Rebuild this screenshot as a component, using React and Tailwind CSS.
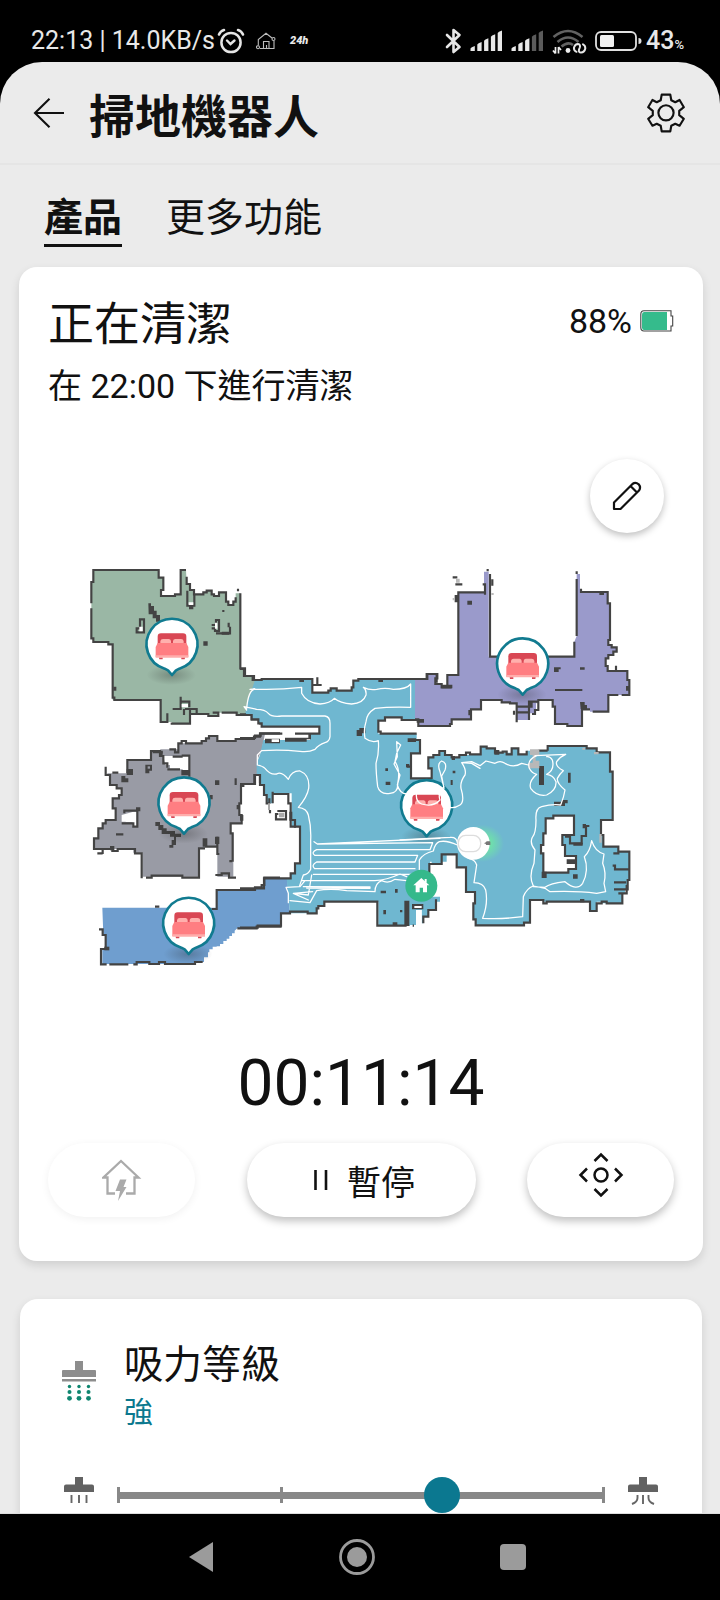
import React from "react";

const WALL = "#434343";

const Bluetooth = () => (
  <svg width="17" height="26" viewBox="0 0 17 26" fill="none" stroke="#e6e6e6" strokeWidth="2.6" strokeLinejoin="round" strokeLinecap="round" aria-hidden="true">
    <path d="M2 7 14.500 19 8.500 24 V2 L14.500 7 2 19" />
  </svg>
);

const Alarm = () => (
  <svg width="28" height="26" viewBox="0 0 28 26" fill="none" stroke="#e6e6e6" strokeLinecap="round" aria-hidden="true">
    <circle cx="14" cy="14.500" r="9.600" strokeWidth="2.500" />
    <path d="M10 12.500 13.500 16 17.500 12.500" strokeWidth="2.400" />
    <path d="M2 6.500Q3.500 3 7 2M26 6.500Q24.500 3 21 2" strokeWidth="2.600" />
  </svg>
);

const SmartHome = () => (
  <svg width="20" height="18" viewBox="0 0 20 18" fill="none" stroke="#bdbdbd" strokeWidth="1.100" aria-hidden="true">
    <path d="M2.300 13.500V7.500L10 1.200 16 6M18 9V16.500H4M7.500 16V9.500H13V16M10.500 16V13" />
    <circle cx="2" cy="15.200" r="1.500" />
    <circle cx="17.500" cy="7" r="1.500" />
  </svg>
);

const Signal = ({ level }) => (
  <svg width="33" height="22" viewBox="0 0 33 22" aria-hidden="true">
    {[0, 1, 2, 3, 4].map((i) => (
      <path
        key={i}
        d={`M${i * 6.8 + 0.5} ${18.500 - i * 3.900}Q${i * 6.8 + 1} ${17 - i * 3.900} ${i * 6.8 + 4.800} ${16 - i * 3.900}V21H${i * 6.8 + 0.500}Z`}
        fill={i < level ? "#e8e8e8" : "#5b5b5b"}
      />
    ))}
  </svg>
);

const Wifi = () => (
  <svg width="35" height="25" viewBox="0 0 35 25" fill="none" aria-hidden="true">
    <g stroke="#626262" strokeWidth="2.600">
      <path d="M1.500 8Q16 -4 30.500 8" />
      <path d="M5.500 13Q16 4 26.500 13" />
      <path d="M9.500 17.500Q16 12 21 16" />
    </g>
    <circle cx="16" cy="21.500" r="2.400" fill="#eee" />
    <path d="M3.500 18V24.500M3.500 24.500 1 21.500M6.500 24.500V18M6.500 18 9 21" stroke="#eee" strokeWidth="1.700" />
    <path d="M24.500 22.800Q21.500 21.500 22 18.500 23 15 26 15 28.800 15.500 27.800 18.500L27 20.500Q26.300 23.500 29 23.500 32.500 23.300 33.300 19.500 33.500 16.500 31 15.300" stroke="#e6e6e6" strokeWidth="2" strokeLinecap="round" />
  </svg>
);

const PhoneBattery = () => (
  <svg width="47" height="20" viewBox="0 0 47 20" aria-hidden="true">
    <rect x="1" y="1" width="40" height="18" rx="5" fill="none" stroke="#e0e0e0" strokeWidth="1.800" />
    <rect x="5" y="4" width="14" height="12" rx="1.500" fill="#f0f0f0" />
    <path d="M43.500 7Q46.500 7 46.500 10T43.500 13Z" fill="#e0e0e0" />
  </svg>
);

const BackArrow = () => (
  <svg width="32" height="32" viewBox="0 0 32 32" fill="none" stroke="#111" strokeWidth="2.100" aria-hidden="true">
    <path d="M31 16H2M16.500 1.700 2 16 16.500 30.300" />
  </svg>
);

const Gear = () => (
  <svg width="40" height="40" viewBox="858 280 120 121" fill="none" stroke="#111" strokeWidth="6.500" strokeLinejoin="round" aria-hidden="true">
    <path d="M905 285H931L934 302 946 308 959 301 972 323 958 334V347L972 358 959 379 946 373 934 379 931 396H905L902 379 890 373 877 379 864 358 878 347V334L864 323 877 301 890 308 902 302Z" />
    <circle cx="918" cy="340" r="23" />
  </svg>
);

const RobotBattery = () => (
  <svg width="34" height="22" viewBox="0 0 34 22" fill="none" aria-hidden="true">
    <path d="M4 .8H31V6H32.700V16H31V21H4Q.8 21 .8 17.500V4.300Q.8 .8 4 .8Z" stroke="#444" strokeWidth="1.100" />
    <path d="M4 2H27V20H4Q2 20 2 17.500V4.500Q2 2 4 2Z" fill="#35bb8c" />
  </svg>
);

const Pencil = () => (
  <svg width="30" height="30" viewBox="0 0 30 30" fill="none" stroke="#111" strokeWidth="2.200" strokeLinejoin="round" aria-hidden="true">
    <path d="M2 21.500 20.500 3Q23.500 .8 26.700 3.300 29.200 6.500 27 9.500L8.500 28H2ZM18.500 5 25 11.500" />
  </svg>
);

const ChargeHome = () => (
  <svg width="40" height="42" viewBox="0 0 40 42" aria-hidden="true">
    <path d="M13 34.500H5.500V18.500H1.500L19 2 36.500 18.500H32.500V34.500H24" fill="none" stroke="#aaa" strokeWidth="2.300" />
    <path d="M18 20.500H24.500L21.500 28H24.500L16 42 18 32H13.500Z" fill="#aaa" />
  </svg>
);

const Pause = () => (
  <svg width="16" height="22" viewBox="0 0 16 22" aria-hidden="true">
    <path d="M2.500 1V21M13 1V21" stroke="#111" strokeWidth="2.600" />
  </svg>
);

const DirectionPad = () => (
  <svg width="46" height="46" viewBox="0 0 46 46" fill="none" stroke="#111" strokeWidth="2.500" aria-hidden="true">
    <circle cx="23" cy="23" r="6.500" />
    <path d="M16.500 9 23 2.500 29.500 9M16.500 37 23 43.500 29.500 37M9 16.500 2.500 23 9 29.500M37 16.500 43.500 23 37 29.500" />
  </svg>
);

const SuctionIcon = () => (
  <svg width="34" height="40" viewBox="0 0 34 40" aria-hidden="true">
    <path d="M13 0H21V9H33Q34 9 34 10V16H0V10Q0 9 1 9H13ZM0 18H34V20.500H0Z" fill="#8d8d8d" />
    <g fill="#0f8670">
      {[7.500, 17, 26.500].map((x) => (
        <g key={x}>
          <circle cx={x} cy="25.500" r="1.700" />
          <circle cx={x} cy="31" r="2" />
          <circle cx={x} cy="37.300" r="2.400" />
        </g>
      ))}
    </g>
  </svg>
);

const NozzleIcon = ({ wide }) => (
  <svg width="30" height="28" viewBox="0 0 30 28" className="shrink-0" aria-hidden="true">
    <path d="M11 0H19V7.500H28Q30 7.500 30 9.500V15H0V9.500Q0 7.500 2 7.500H11Z" fill="#626262" />
    <path d={wide ? "M9.500 18V21Q9.500 25 4 27M15 18V27M20.500 18V21Q20.500 25 26 27" : "M7.500 18V26M15 18V26M22.500 18V26"} fill="none" stroke="#666" strokeWidth="1.900" />
  </svg>
);

const RoomPin = ({ x, y }) => (
  <g transform={`translate(${x} ${y})`}>
    <ellipse cx="-2" cy="92" rx="74" ry="30" fill="url(#pinShadow)" />
    <path d="M-22 73A76.500 76.500 0 1 1 22 73L12 78 0 92-12 78Z" fill="#fff" stroke="#117b90" strokeWidth="8" strokeLinejoin="round" />
    <rect x="-43" y="-33" width="86" height="40" rx="10" fill="#d94754" />
    <path d="M-35 -2V-9Q-34 -16-27 -16H-9Q-3 -15-3 -9V-2ZM3 -2V-9Q3 -15 9 -16H27Q34 -16 35 -9V-2Z" fill="#ffb0ad" />
    <path d="M-43 -4H43L49 8V38H-49V8Z" fill="#ff7e82" />
    <path d="M-49 33H49V40H-49Z" fill="#ffadab" />
    <path d="M-39 40H-28V45H-38ZM28 40H39L38 45H28Z" fill="#d94754" />
  </g>
);

const CleaningMap = () => (
  <svg viewBox="0 0 1680 1230" className="w-full" role="img" aria-label="清潔地圖">
    <defs>
      <radialGradient id="pinShadow">
        <stop offset="0" stopColor="#222" stopOpacity=".28" />
        <stop offset="1" stopColor="#222" stopOpacity="0" />
      </radialGradient>
      <radialGradient id="robotGlow">
        <stop offset=".4" stopColor="#6fe3a8" stopOpacity=".9" />
        <stop offset="1" stopColor="#6fe3a8" stopOpacity="0" />
      </radialGradient>
    </defs>

    {/* green room */}
    <path fill="#9ab7a5" d="M318 30H302V103H285V108H243V90H250V53H236V30H40V66H34V235H40V246H85V253H98V420H242V486H276V491H330V462H385V468H415V458H470V465H500L502 440 527 370V360H518V348H495V325H481V100H467V125H460V135H445V125H438V97H417V108H402V103H395V92H380V97H370V103H342V90H330V72H320Z" />
    <g fill="none" stroke={WALL} strokeWidth="6.500">
      <path d="M318 30H302V103H285V108H243V90H250V53H236V30H40V66H34V130M34 145V235H40V246H85V253H98V413H103V420H242V486H262V460M276 491H330V447M276 491H272M320 50V72H330V90H342V103H370V97H380V92H395V103H402V108H417V97H438V125H445V135H460V125H467V112M474 86V94M481 100V325H495V348H518V360H545M330 462H385V468H415V458H398M425 458H470V465H515V478H540V490H545M302 410V447H278M302 425H328V442M312 447V465M315 447H350V460" />
      <path d="M322 92V137H343V103M170 217H192V178H180V205H170Z" />
      <path d="M395 195H408V180H417V213H405V205H395M408 220H450V200M430 150V156M446 188V202" />
    </g>
    <path fill="#fff" d="M326 127H340V135H326ZM405 188H412V206H405ZM178 200H188V214H178ZM305 432H324V442H305Z" />
    <path fill={WALL} d="M205 130H213V138H222V152H230V165H240V185H228V175H218V163H206ZM327 138H340V148H327ZM370 244H383V257H370ZM100 380H109V392H100ZM425 215H448V224H425Z" />

    {/* lavender room */}
    <g transform="translate(990 0)">
      <path fill="#9a9acb" d="M14 355H52V342H82V355H76V372H95V382H112V345H145V97H222V35H236V290H493V245L500 228V42H510V96H593V130H600V240H595V255H605V262H620V275H610V285H595V295H587V318H593V333H652V360H658V405H595V455H540V448H516V498H472V492H435V440H428V420H385V430H378V460H357V480H320V430H300V427H275V420H213V448H183V478H125V492H120V498H25V478H14Z" />
      <g fill="none" stroke={WALL} strokeWidth="6.500">
        <path d="M-90 357H52V342H82V355H76V372H95V382H125M112 382V345H145V97H225V73H218M225 97V104M233 27V34M240 42V290H493V245M500 228V57M500 34V42M513 86V96H593V130H600V240H595V255H605V262H620V275H610V285H595V295H587V318H593V333H652V360H658V405H635M625 405H595V455H548M540 448H516V498H472V492H435V440H428V420H385V425H357V480M320 487V430H300V427H275V420H213V448H183V478H125V492H120V498H25V478H0M320 440H354M320 457H354M385 428V450H375V462H366M435 390H517M618 317V330M128 52H142M136 73H157M247 58V77M312 452V464" />
      </g>
      <path fill={WALL} d="M172 122H186V134H172ZM134 105H147V127H134ZM432 322H452V328H446V336H432ZM510 322H524V329H510ZM510 426H524V435H531V447H512ZM95 374H127V385H95ZM568 97H582V105H568ZM354 424H368V443H354ZM648 378H660V392H648ZM175 450H184V466H175ZM22 477H42V486H22Z" />
      <path fill="#bbb" d="M138 56H149V68H138ZM128 114H135V121H128ZM244 99H251V105H244Z" />
    </g>

    {/* grey room */}
    <g transform="translate(0 480)">
      <path fill="#999ba5" d="M555 42H540V50H522V57H467V63H412V48H387V55H378V63H365V70H295V88H240L245 95H213V120H142V160H82V165H90V195H110V205H125V225H117V235H98V265H107V300H77V310H68V325H55V355H42V387H160V398H187V470H355V387H375V380H412V470H460V340H452V310H485V285H478V250H483V198H490V192H523V165H532V120L545 90Z" />
      <path fill="#fff" d="M250 108H328V155H308V148H270V135H256ZM125 285L160 275H170V318H158V305H125Z" />
      <g fill="none" stroke={WALL} strokeWidth="6.500">
        <path d="M600 40H540V50H522V57H467V63H412V48H387V55H378V63H365V70H318V63H305V70H295V97H285V88H268M248 97H240V93H213V120H142V160M97 158H115M77 140V165H90V195H110V205H125V225H117V235H98V265H107V300H77V310H68V325H55V355H42V387H90M68 400H52M68 387V402M92 385H97V393H113V387H165V400H185V475M198 473H215V467H307V473H357V385H375M375 380H410M412 350V402H418M406 465H425V460H447V473H468M458 425V340H452V310H485V285H478V250H483V198H490V192H523V165H540V190M240 95V108H250V130H262V143M262 148H300M328 170V107H305M278 110H308M133 280V272H172V320H160V310H125M108 343H130M467 175V195" />
      </g>
      <path fill="#fff" d="M137 282H168V306H137Z" />
      <path fill={WALL} d="M405 181H418V195H405ZM196 134H216V152H208V160H196ZM140 147H159V165H140ZM124 168H136V175H145V187H124ZM368 355H382V380H368ZM405 350H418V372H405ZM226 306H240V315H250V325H260V333H285V341H303V351H288V375H280V383H268V375H275V360H282V350H270V342H245V330H235V318H226ZM470 255H480V268H470ZM480 285H490V302H480ZM168 262H181V274H168ZM90 378H103V391H90ZM448 420H456V427H448ZM304 150H328V166H304ZM390 225H398V238H390ZM218 92H248V108H240V100H218Z" />
      <path fill="#999ba5" d="M203 139H210V146H203Z" />
    </g>

    {/* steel-blue room */}
    <g transform="translate(0 480)">
      <path fill="#6f9ecf" d="M67 563H410V510H525V502H545V495H553V475H622L630 580H603V617H533V625H472L464 632V640H456V648H448V656H440V663H430V672H420V679H410V680H398V688H388V697H384V712H372V726H345V732H67V690H78V645H70Z" />
      <path fill="none" stroke={WALL} strokeWidth="6.500" d="M600 473H553V495H545V502H525V510H410V567H395M225 560H238M57 628H68V645H77V687H63V733H80M88 733H145M160 733H170V726H208V732H237V726H255V732H345V726H368M472 625H530V620H605" />
      <path fill={WALL} d="M73 680H88V691H73Z" />
    </g>

    {/* main cyan area */}
    <g transform="translate(480 300)">
      <path fill="#6fb7d0" d="M45 60H65V57H217V98H265V92H272V85H290V92H335V82H340V62H355V57H525V180H485V172H435V182H415V221H530V240H540V280H513V355H620V605H570V710H600V725H588V750H565V770H550V790H545V750H528V797H415V725H253V738H235V745H230V760H150L140 655H152V640H165V610H180V500H155V400H98V430H80V405H72V375H60V345H50V310L60 285 70 240H210V221H238V198H65V190H55V178H35V165H15L22 130Z" />
      <path fill="#fff" d="M125 218H165V240H125ZM510 750H545V797H528V800H510Z" />
      <path fill="#6fb7d0" d="M508 740H528V795H508Z" />
      <g fill="none" stroke={WALL} strokeWidth="6.500">
        <path d="M0 27H12V48H42V60H65V57H217V98H265V92H272V85H290V92H335V82H340V62H355V57H560V42H590V68M232 52V75M217 75H245M0 163H15V165H35V178H55V190H65V200H238V221H165M127 221H62V227H45V234H0M550 180H485V172H435V182H415V215H422V221H530M505 240H540V280H513V355H600M0 372H45V345H60V375H72V405H80V430H90M88 415V432M98 395V430M98 402H145V430H152V500H180V610H165V640H152V655H72V685H0M0 803H53V797H123V760H150V755H203V760H230V745H235V738H253V725H412V797H500M500 725V797M518 797H522M588 718V750H565V770H550V790M500 320H510" />
        <path d="M112 453H138V478H108V462H115M90 450V460M155 480H165V503" />
      </g>
      <path fill={WALL} d="M75 236H120V250H75ZM135 233H205V222H213V238H200V245H135ZM493 722H508V798H493ZM516 732H550V748H516ZM350 210H358V204H376V220H366V228H350ZM530 178H552V188H530ZM503 235H528V246H503ZM437 365H451V375H437ZM436 325H444V333H436ZM422 692H438V700H422ZM465 687H473V698H465ZM430 750H438V763H430ZM480 750H487V757H480ZM178 57H192V66H178ZM415 57H429V66H415ZM148 455H157V482H148ZM458 787H472V797H458ZM498 312H508V322H498Z" />
      <path fill="#fff" d="M95 238H117V246H95ZM523 738H545V744H523Z" />
      <path fill="#aaa" d="M117 458H133V472H117ZM84 430H90V450H84Z" />
    </g>
    <g transform="translate(960 480)">
      <path fill="#6fb7d0" d="M95 178V145H85V112H100V105H118V93H135V105H155V112H178V105H240V80H260V85H285V98H335V85H355V103H380V92H443V78H560V85H590V97H630V155H638V300H603V345H610V380H655V395H688V480H683V508H675V520H667V550H605V545H590V573H570V545H430V540H390V608H372V616H227V598H220V550H225V516H198V442H170V403H125V432H95V180Z" />
      <path fill="#fff" stroke={WALL} strokeWidth="6.500" d="M460 287H522V345H487V375H495V408H528V447H505V458H430V400H423V375H430V340H437V295H460Z" />
      <g fill="none" stroke={WALL} strokeWidth="6.500">
        <path d="M95 178V145H85V112H100V105H118V93H135V105H155V112H178V105H198V98H210V103H242V80H260V85H285V98H308V95H320V103H335V85H355V103H380V92M443 92V78H560V85H590V97H630V155H638V300H603V345H610V380H655V395H688V480H683V508H642M667 520H655M680 495V520H667V550H620V545H605V550H590V573H570V545H440V550H430V540H390V608H372V616H227V598H220V550H225V516H198V442H170V403H125V432H88V470M415 92H443M638 437H645V448H685M642 487H678M495 350H510V370H545V348H558V318H568M655 380V400H640" />
      </g>
      <path fill={WALL} d="M417 138H432V195H417ZM504 158H512V188H504ZM462 245H485V240H503V250H495V258H462ZM519 463H533V476H519ZM425 455H440V474H425ZM152 180H158V195H152ZM158 152H166V160H158ZM548 312H558V325H548ZM520 368H548V377H520ZM500 418H530V432H500ZM283 90H298V104H283ZM155 108H165V120H155ZM540 537H553V547H540Z" />
      <path fill="#b8b8b8" d="M390 88H418V105H407V122H418V145H385V128H398V105H390ZM598 342H605V368H598ZM547 83H555V89H547ZM582 96H596V103H582Z" />
    </g>

    {/* room markers */}
    <RoomPin x={276} y={253} />
    <RoomPin x={1328} y={312} />
    <RoomPin x={312} y={729} />
    <RoomPin x={1040} y={737} />
    <RoomPin x={326} y={1090} />

    {/* cleaning trace */}
    <g fill="none" stroke="#fff" strokeWidth="3.800" strokeLinejoin="round" strokeLinecap="round">
      <g transform="translate(480 300)">
        <path d="M20 150 12 140 50 148Q75 148 85 160 95 172 125 168H255Q270 170 270 190V230Q268 245 255 248 235 255 225 268 205 278 180 274 120 268 65 272L52 285V315Q68 318 75 325 90 345 110 342 125 332 145 358 155 332 180 333 210 345 206 385 202 410 175 442 200 445 205 465 214 500 212 540V628Q205 643 190 645L178 680 138 682 145 700V728" />
        <path d="M20 145Q25 90 45 87L30 88M40 87Q110 90 185 82V100Q200 130 240 132 270 130 283 115 300 130 335 132 370 130 378 105 380 90 370 82 390 92 410 88 435 82 460 88 500 88 512 72V142Q450 140 405 145 380 160 378 185 370 210 375 235 395 250 415 242 418 280 408 310 408 340 413 380 420 405 450 400 475 398 473 370 482 330 465 305L470 280 482 255 470 245 472 290 462 312 480 345 472 375Q480 402 500 402" />
        <path d="M222 545 232 552 600 535M235 552 578 548 570 569H230Q212 577 224 586H533L525 606H230Q212 616 224 626H525M220 643H530M185 662H405Q440 660 480 642L500 650M180 680 195 662M190 680 390 681V685L200 684M215 645 205 705 160 700 205 720M150 722 210 728 230 692Q270 684 320 692L405 695Q405 670 425 662 445 672 465 658L500 662M160 700 218 695" />
      </g>
      <g transform="translate(960 480)">
        <path d="M172 368Q170 350 150 352L0 360M172 375Q140 360 118 365 105 370 100 393 70 400 58 420V455M205 415Q225 418 230 435L222 488Q250 488 257 510 265 550 248 595 310 598 368 590L370 530Q380 505 400 498 385 470 402 430L405 390Q388 370 397 352 408 340 408 300 405 265 425 260 455 252 482 255 492 230 495 210 470 190 472 175 480 160 490 152 465 140 470 125 480 110 497 103L405 107" />
        <path d="M410 107Q380 120 388 145 395 160 410 163 385 185 392 205 410 230 440 225 470 210 468 185 460 165 440 163 465 150 457 120 450 108 440 110M240 145 215 130 185 128Q200 150 195 165 180 185 183 205 195 245 180 255 165 265 150 262M185 128 215 125 240 137 258 123 285 130Q300 120 315 130 340 145 365 130L385 135M130 195 120 155Q110 130 125 123 142 128 135 150L125 168 132 205M50 215Q45 245 65 252 100 262 120 240 112 220 132 200" />
        <path d="M400 498 435 505 450 515Q530 512 590 520L617 515 612 490Q620 460 608 430L612 402Q585 395 575 362 570 395 553 410 568 450 548 490 530 515 495 485 450 490 435 502L400 500" />
      </g>
    </g>

    {/* robot */}
    <ellipse cx="1208" cy="850" rx="64" ry="56" fill="url(#robotGlow)" />
    <circle cx="1180" cy="850" r="49" fill="#fff" />
    <rect x="1135" y="826" width="67" height="49" rx="22" fill="#fff" stroke="#ddd" strokeWidth="4" />
    <path d="M1222 844H1230V855H1222L1212 850Z" fill="#888" />
    <path d="M1218 845H1231V855H1218Z" fill="#777" />

    {/* dock */}
    <circle cx="1024" cy="977" r="48" fill="#35b98b" />
    <path d="M1024 954 1048 976H1041V997H1029V983H1019V997H1007V976H1000Z" fill="#fff" />
    <path d="M1034 957H1040V968H1034Z" fill="#fff" />
  </svg>
);

const pill = "flex h-[74px] items-center justify-center rounded-full bg-white";

export default function App() {
  return (
    <div className="flex h-screen flex-col bg-black font-[Roboto,'Noto_Sans_CJK_TC',sans-serif] text-[#111]">
      <div className="flex h-[62px] shrink-0 items-end justify-between pr-9 pb-2 pl-[31px] text-[25px] leading-[26px] text-[#e8e8e8]">
        <div className="flex items-center">
          <span>22:13 | 14.0KB/s</span>
          <span className="ml-[2px]"><Alarm /></span>
          <span className="ml-[11px]"><SmartHome /></span>
          <span className="ml-[14px] text-[11px] font-black italic">24h</span>
        </div>
        <div className="flex items-center gap-2">
          <Bluetooth />
          <Signal level={5} />
          <Signal level={3} />
          <Wifi />
          <PhoneBattery />
          <span className="-ml-1 flex items-baseline font-medium">43<span className="text-[13px] leading-none">%</span></span>
        </div>
      </div>

      <div className="flex min-h-0 flex-1 flex-col overflow-hidden rounded-t-[42px] bg-[#ebebeb]">
        <header className="flex h-[103px] shrink-0 items-center border-b-2 border-[#e5e5e5] pr-[34px] pl-[33px]">
          <button aria-label="返回"><BackArrow /></button>
          <h1 className="ml-6 flex-1 font-['Noto_Sans_CJK_TC',sans-serif] text-[46px] leading-[56px] font-bold">掃地機器人</h1>
          <button aria-label="設定"><Gear /></button>
        </header>

        <main className="min-h-0 flex-1 overflow-y-auto pb-6 [scrollbar-width:none]">
          <nav className="flex gap-11 px-11 pt-[23px] font-['Noto_Sans_CJK_TC',sans-serif] text-[39px] leading-[52px]">
            <a href="#product" aria-current="page" className="border-b-[3px] border-[#111] pb-1 font-bold">產品</a>
            <a href="#more">更多功能</a>
          </nav>

          <section className="mt-5 mr-[17px] ml-[19px] rounded-[18px] bg-white px-[29px] pt-6 pb-11 shadow-[0_4px_10px_rgba(0,0,0,0.12)]">
            <div className="flex items-start justify-between">
              <h2 className="font-['Noto_Sans_CJK_TC',sans-serif] text-[46px] leading-[58px]">正在清潔</h2>
              <div className="flex items-center gap-2 pt-[10px] text-[34px] leading-[40px]">
                <span>88%</span>
                <RobotBattery />
              </div>
            </div>
            <p className="mt-3 text-[34px] leading-[50px]">在 22:00 下進行清潔</p>
            <div className="mt-12 flex justify-end pr-[10px]">
              <button aria-label="編輯地圖" className="flex size-[74px] items-center justify-center rounded-full bg-white shadow-[0_3px_7px_rgba(0,0,0,0.25)]">
                <Pencil />
              </button>
            </div>
            <div className="mt-[27px] pr-[34px] pl-8">
              <CleaningMap />
            </div>
            <div role="timer" className="mt-[75px] text-center text-[64px] leading-[78px]">00:11:14</div>
            <div className="mt-5 flex justify-between">
              <button disabled aria-label="返回充電" className={`${pill} w-[147px] shadow-[0_2px_9px_rgba(0,0,0,0.06)]`}>
                <ChargeHome />
              </button>
              <button className={`${pill} w-[229px] gap-[18px] pl-[6px] font-['Noto_Sans_CJK_TC',sans-serif] text-[34px] shadow-[0_4px_9px_rgba(0,0,0,0.25)]`}>
                <Pause />
                <span>暫停</span>
              </button>
              <button aria-label="手動控制" className={`${pill} w-[147px] pb-[10px] shadow-[0_4px_9px_rgba(0,0,0,0.25)]`}>
                <DirectionPad />
              </button>
            </div>
          </section>

          <section className="mt-[38px] mr-[18px] ml-5 rounded-[18px] bg-white px-[42px] pt-9 pb-10 shadow-[0_4px_10px_rgba(0,0,0,0.12)]">
            <div className="flex items-start gap-7">
              <div className="pt-[26px]"><SuctionIcon /></div>
              <div className="font-['Noto_Sans_CJK_TC',sans-serif]">
                <h2 className="text-[39px] leading-[52px]"><label htmlFor="suction">吸力等級</label></h2>
                <p className="text-[29px] leading-[46px] text-[#0b788e]">強</p>
              </div>
            </div>
            <div className="mt-[35px] flex items-center px-[2px]">
              <NozzleIcon />
              <div className="relative mx-[5px] flex-1">
                <div className="absolute inset-x-[18px] top-[19px] flex h-[16px] items-center">
                  <div className="h-[7px] w-full bg-[#888]" />
                  <span className="absolute left-0 h-4 w-[3px] bg-[#888]" />
                  <span className="absolute left-1/3 h-4 w-[3px] bg-[#888]" />
                  <span className="absolute right-0 h-4 w-[3px] bg-[#888]" />
                </div>
                <input
                  id="suction"
                  type="range"
                  min="0"
                  max="3"
                  step="1"
                  defaultValue="2"
                  className="relative mt-[9px] block h-9 w-full appearance-none bg-transparent [&::-webkit-slider-thumb]:size-9 [&::-webkit-slider-thumb]:appearance-none [&::-webkit-slider-thumb]:rounded-full [&::-webkit-slider-thumb]:bg-[#0b7890]"
                />
              </div>
              <NozzleIcon wide />
            </div>
          </section>
        </main>
      </div>

      <div className="flex h-[87px] shrink-0 items-center justify-center gap-[124px] border-t border-[#ddd] bg-black pr-[6px]">
        <button aria-label="上一頁">
          <svg width="26" height="32" viewBox="0 0 26 32" aria-hidden="true"><path d="M25 1V31L1 16Z" fill="#9b9b9b" /></svg>
        </button>
        <button aria-label="主畫面">
          <svg width="38" height="38" viewBox="0 0 38 38" aria-hidden="true">
            <circle cx="19" cy="19" r="16.500" fill="none" stroke="#9b9b9b" strokeWidth="2.800" />
            <circle cx="19" cy="19" r="10" fill="#9b9b9b" />
          </svg>
        </button>
        <button aria-label="最近使用" className="size-[26px] rounded-[4px] bg-[#9b9b9b]" />
      </div>
    </div>
  );
}
